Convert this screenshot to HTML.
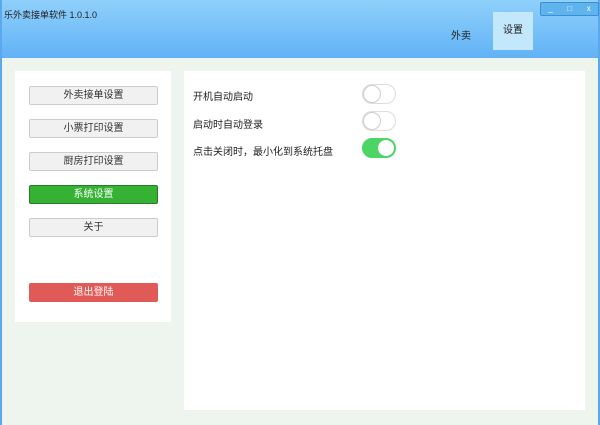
<!DOCTYPE html><html><head><meta charset="utf-8"><style>
body{margin:0;width:600px;height:425px;overflow:hidden;font-family:"Liberation Sans","Noto Sans CJK SC",sans-serif;font-size:10px;color:#222;position:relative;background:#eef4ee}
.hdr{position:absolute;left:0;top:0;width:600px;height:58px;background:linear-gradient(#8fd0fb,#62b2f6)}
.t{position:absolute}
.btn{position:absolute;left:29px;width:127px;height:17px;border:1px solid #ccc;border-radius:2px;background:#f1f1f1;text-align:center;line-height:18px;color:#333}
.tg{position:absolute;left:362px;width:32px;height:18px;border:1px solid #ddd;border-radius:10px;background:#fff}
.tg i{position:absolute;left:0;top:0;width:16px;height:16px;border-radius:50%;border:1px solid #ccc;background:#fff}
</style></head><body>
<div class="hdr"></div>
<div style="position:absolute;left:0;top:0;width:2px;height:425px;background:#5aa8ee"></div>
<div style="position:absolute;right:0;top:0;width:2px;height:425px;background:#5aa8ee"></div>
<div class="t" style="left:4px;top:8px;font-size:9px">乐外卖接单软件 1.0.1.0</div>
<div class="t" style="left:451px;top:27px">外卖</div>
<div class="t" style="left:493px;top:12px;width:40px;height:38px;background:#c4e8fb;text-align:center;line-height:38px">设置</div>
<div class="t" style="left:540px;top:2px;width:57px;height:12px;background:#5fb4ee;border:1px solid #3b8fd6;border-radius:2px;color:#fff;font-size:8px;line-height:11px;display:flex;justify-content:space-around">_<span>□</span><span>x</span></div>
<div class="t" style="left:15px;top:71px;width:156px;height:251px;background:#fff"></div>
<div class="t" style="left:184px;top:71px;width:401px;height:339px;background:#fff"></div>
<div class="btn" style="top:86px">外卖接单设置</div>
<div class="btn" style="top:119px">小票打印设置</div>
<div class="btn" style="top:152px">厨房打印设置</div>
<div class="btn" style="top:185px;background:#35b234;border-color:#2a7a2a;color:#fff">系统设置</div>
<div class="btn" style="top:218px">关于</div>
<div class="btn" style="top:283px;background:#e05a58;border-color:#e05a58;color:#fff">退出登陆</div>
<div class="t" style="left:193px;top:88px">开机自动启动</div>
<div class="t" style="left:193px;top:116px">启动时自动登录</div>
<div class="t" style="left:193px;top:143px">点击关闭时，最小化到系统托盘</div>
<div class="tg" style="top:84px"><i></i></div>
<div class="tg" style="top:111px"><i></i></div>
<div class="tg" style="top:138px;background:#4cd565;border-color:#4cd565"><i style="left:14px;border-color:#4cd565"></i></div>
</body></html>
